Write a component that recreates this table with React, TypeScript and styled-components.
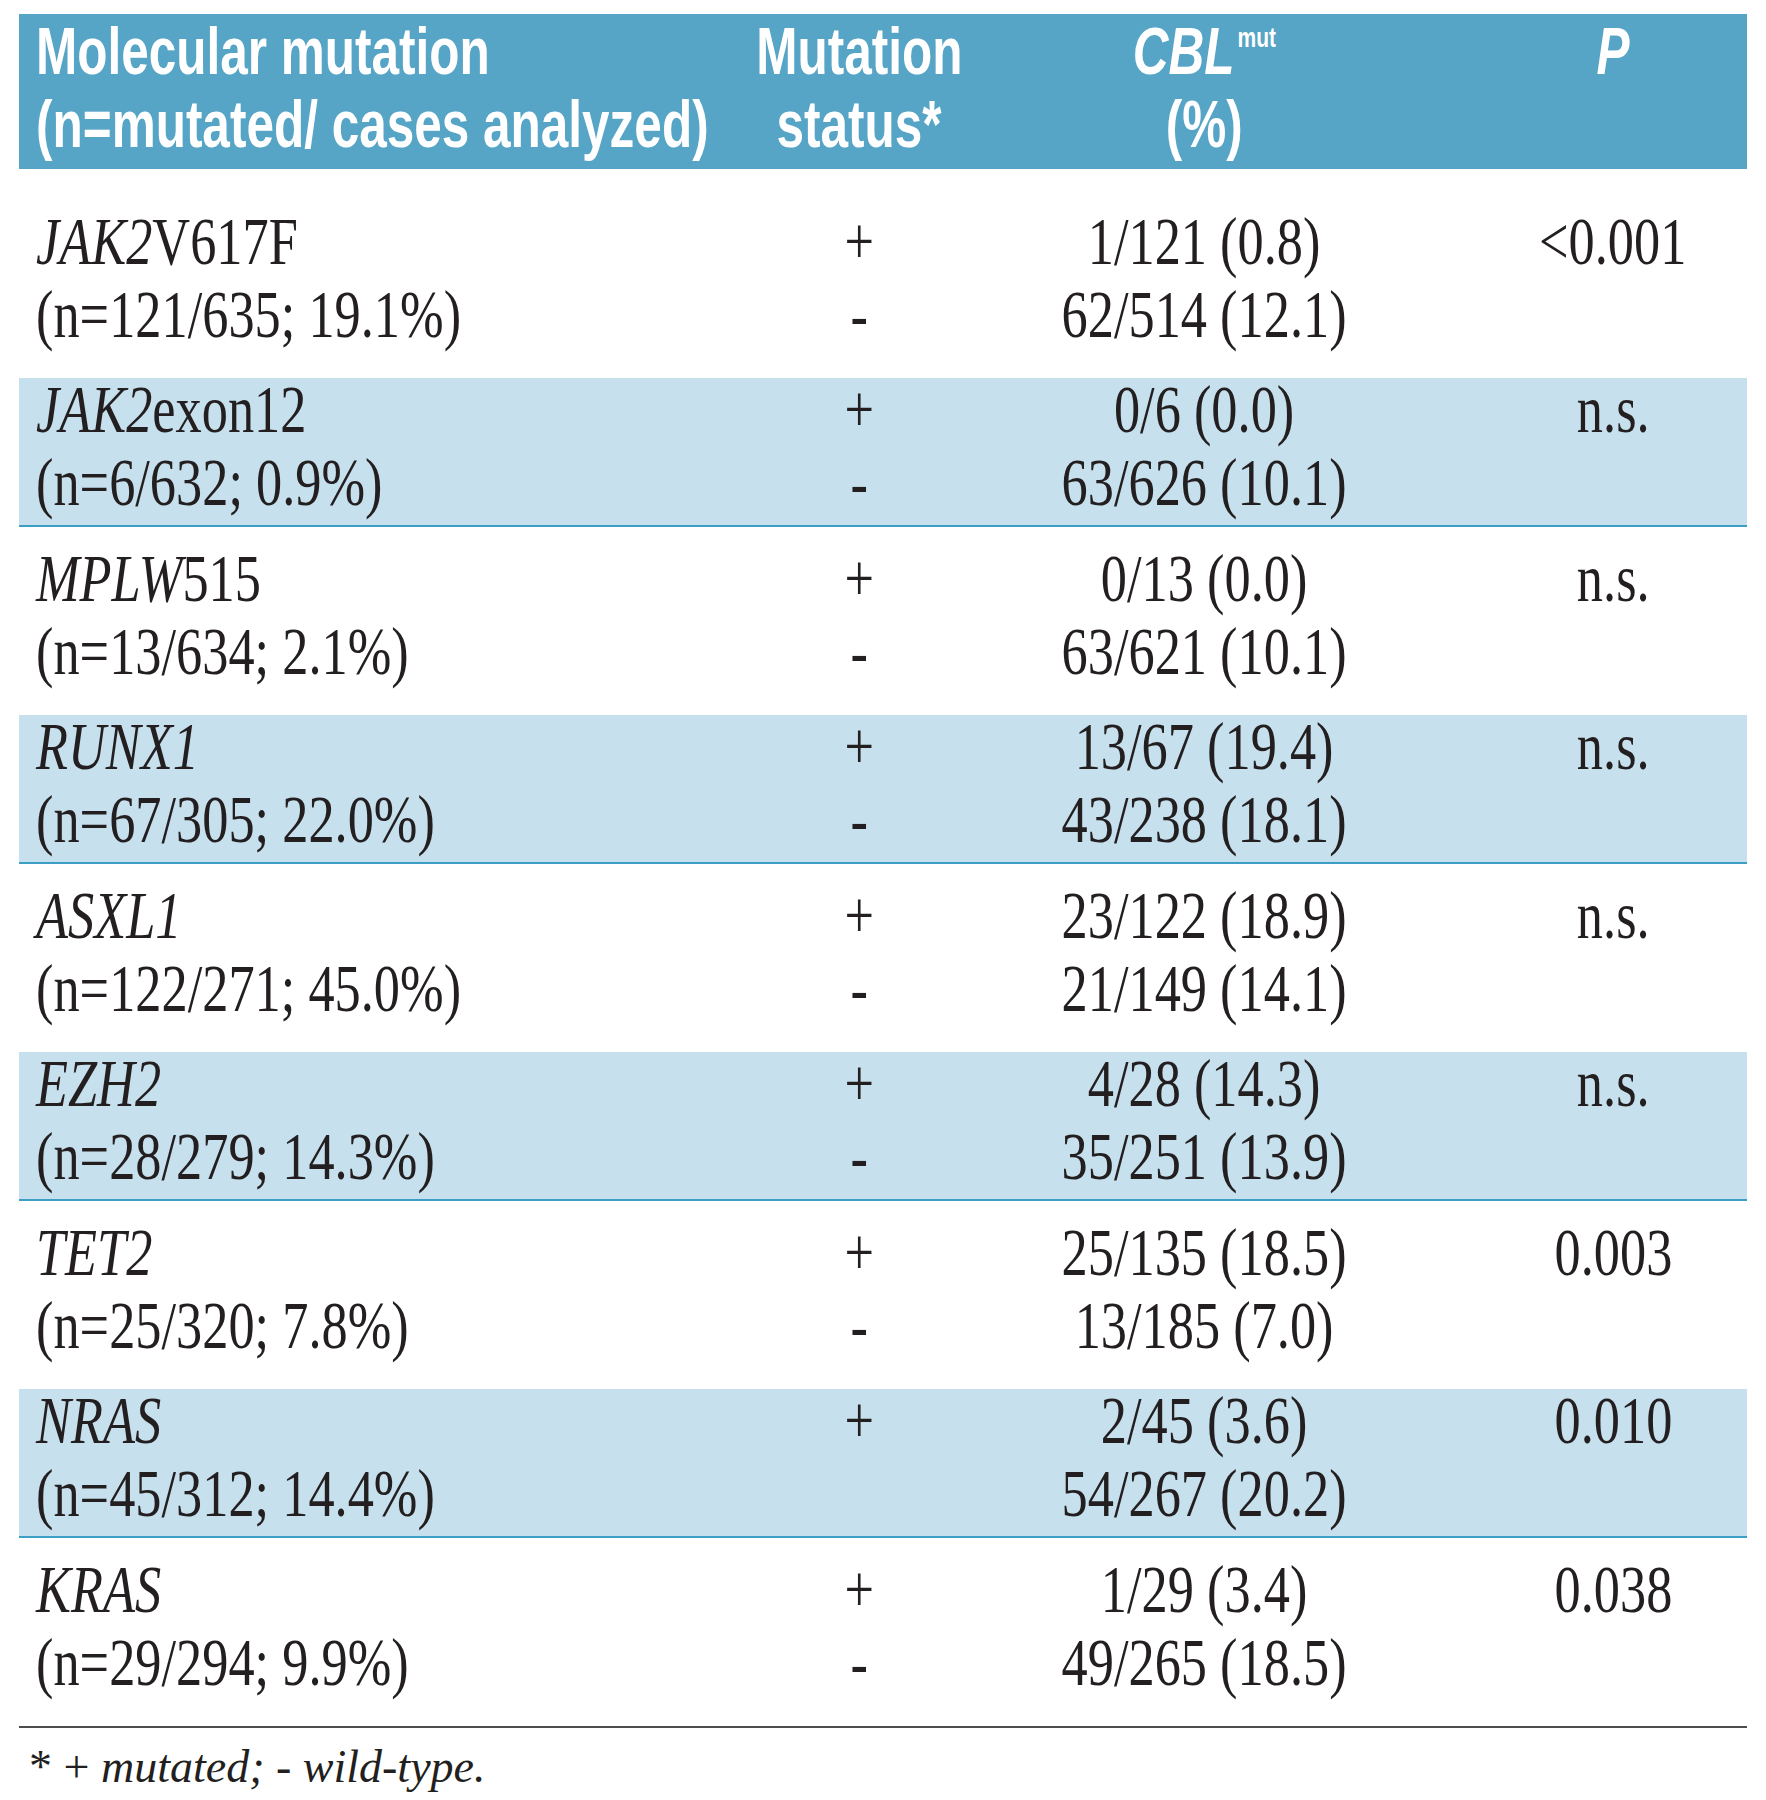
import React from "react";
import styled, { createGlobalStyle } from "styled-components";

const GlobalStyle = createGlobalStyle`
  body {
    margin: 0;
    background: #ffffff;
  }
`;

const COLUMNS = "770px 140px 550px 268px";

const Page = styled.div`
  padding: 14px 0 0 19px;
  width: 1728px;
`;

const HeadRow = styled.div`
  display: grid;
  grid-template-columns: ${COLUMNS};
  background: #56a4c6;
  color: #ffffff;
  padding: 1px 0 8px;
  font-family: "Liberation Sans", Arial, sans-serif;
  font-weight: 700;
  font-size: 66px;
`;

const HeadCell = styled.div<{ $left?: boolean }>`
  display: flex;
  flex-direction: column;
  align-items: ${(p) => (p.$left ? "flex-start" : "center")};
  padding-left: ${(p) => (p.$left ? "17px" : "0")};
`;

const HeadLine = styled.span<{ $left?: boolean }>`
  display: block;
  height: 73px;
  line-height: 73px;
  white-space: nowrap;
  transform: scaleX(0.75);
  transform-origin: ${(p) => (p.$left ? "left" : "center")};
`;

const Sup = styled.span`
  font-size: 28px;
  font-style: normal;
  vertical-align: 27px;
  line-height: 0;
  margin-left: 4px;
`;

const Body = styled.div`
  margin-top: 21px;
  border-bottom: 2px solid #4d4d4d;
`;

const Row = styled.div<{ $shaded: boolean }>`
  display: grid;
  grid-template-columns: ${COLUMNS};
  background: ${(p) => (p.$shaded ? "#c7e0ed" : "transparent")};
  padding: ${(p) => (p.$shaded ? "0 0 12px" : "20px 0 33px")};
  border-bottom: ${(p) => (p.$shaded ? "2px solid #3e9fc6" : "none")};
  font-family: "Liberation Serif", "Times New Roman", serif;
  font-size: 68px;
  color: #231f20;
`;

const Cell = styled.div<{ $left?: boolean }>`
  display: flex;
  flex-direction: column;
  gap: 11px;
  align-items: ${(p) => (p.$left ? "flex-start" : "center")};
  padding-left: ${(p) => (p.$left ? "17px" : "0")};
`;

const Line = styled.span<{ $left?: boolean }>`
  display: block;
  height: 62px;
  line-height: 62px;
  white-space: nowrap;
  transform: scaleX(0.77);
  transform-origin: ${(p) => (p.$left ? "left" : "center")};
`;

const Gene = styled.i`
  font-style: italic;
`;

const Footnote = styled.div`
  padding: 14px 0 0 10px;
  font-family: "Liberation Serif", "Times New Roman", serif;
  font-size: 46px;
  line-height: 50px;
  color: #231f20;

  em {
    font-style: italic;
  }
`;

interface IMutationRow {
  gene: string;
  suffix?: string;
  count: string;
  mutated: string;
  wild: string;
  p: string;
  noMinus?: boolean;
}

const rows: IMutationRow[] = [
  { gene: "JAK2", suffix: "V617F", count: "(n=121/635; 19.1%)", mutated: "1/121 (0.8)", wild: "62/514 (12.1)", p: "<0.001" },
  { gene: "JAK2", suffix: "exon12", count: "(n=6/632; 0.9%)", mutated: "0/6 (0.0)", wild: "63/626 (10.1)", p: "n.s." },
  { gene: "MPLW", suffix: "515", count: "(n=13/634; 2.1%)", mutated: "0/13 (0.0)", wild: "63/621 (10.1)", p: "n.s." },
  { gene: "RUNX1", count: "(n=67/305; 22.0%)", mutated: "13/67 (19.4)", wild: "43/238 (18.1)", p: "n.s." },
  { gene: "ASXL1", count: "(n=122/271; 45.0%)", mutated: "23/122 (18.9)", wild: "21/149 (14.1)", p: "n.s." },
  { gene: "EZH2", count: "(n=28/279; 14.3%)", mutated: "4/28 (14.3)", wild: "35/251 (13.9)", p: "n.s." },
  { gene: "TET2", count: "(n=25/320; 7.8%)", mutated: "25/135 (18.5)", wild: "13/185 (7.0)", p: "0.003" },
  { gene: "NRAS", count: "(n=45/312; 14.4%)", mutated: "2/45 (3.6)", wild: "54/267 (20.2)", p: "0.010", noMinus: true },
  { gene: "KRAS", count: "(n=29/294; 9.9%)", mutated: "1/29 (3.4)", wild: "49/265 (18.5)", p: "0.038" },
];

const App: React.FunctionComponent = () => {
  return (
    <Page>
      <GlobalStyle />
      <HeadRow>
        <HeadCell $left>
          <HeadLine $left>Molecular mutation</HeadLine>
          <HeadLine $left>(n=mutated/ cases analyzed)</HeadLine>
        </HeadCell>
        <HeadCell>
          <HeadLine>Mutation</HeadLine>
          <HeadLine>status*</HeadLine>
        </HeadCell>
        <HeadCell>
          <HeadLine>
            <i>CBL</i>
            <Sup>mut</Sup>
          </HeadLine>
          <HeadLine>(%)</HeadLine>
        </HeadCell>
        <HeadCell>
          <HeadLine>
            <i>P</i>
          </HeadLine>
        </HeadCell>
      </HeadRow>

      <Body>
        {rows.map((row, i) => (
          <Row key={row.gene + i} $shaded={i % 2 === 1}>
            <Cell $left>
              <Line $left>
                <Gene>{row.gene}</Gene>
                {row.suffix}
              </Line>
              <Line $left>{row.count}</Line>
            </Cell>
            <Cell>
              <Line>+</Line>
              {!row.noMinus && <Line>-</Line>}
            </Cell>
            <Cell>
              <Line>{row.mutated}</Line>
              <Line>{row.wild}</Line>
            </Cell>
            <Cell>
              <Line>{row.p}</Line>
            </Cell>
          </Row>
        ))}
      </Body>

      <Footnote>
        * + <em>mutated; - wild-type.</em>
      </Footnote>
    </Page>
  );
};

export default App;
